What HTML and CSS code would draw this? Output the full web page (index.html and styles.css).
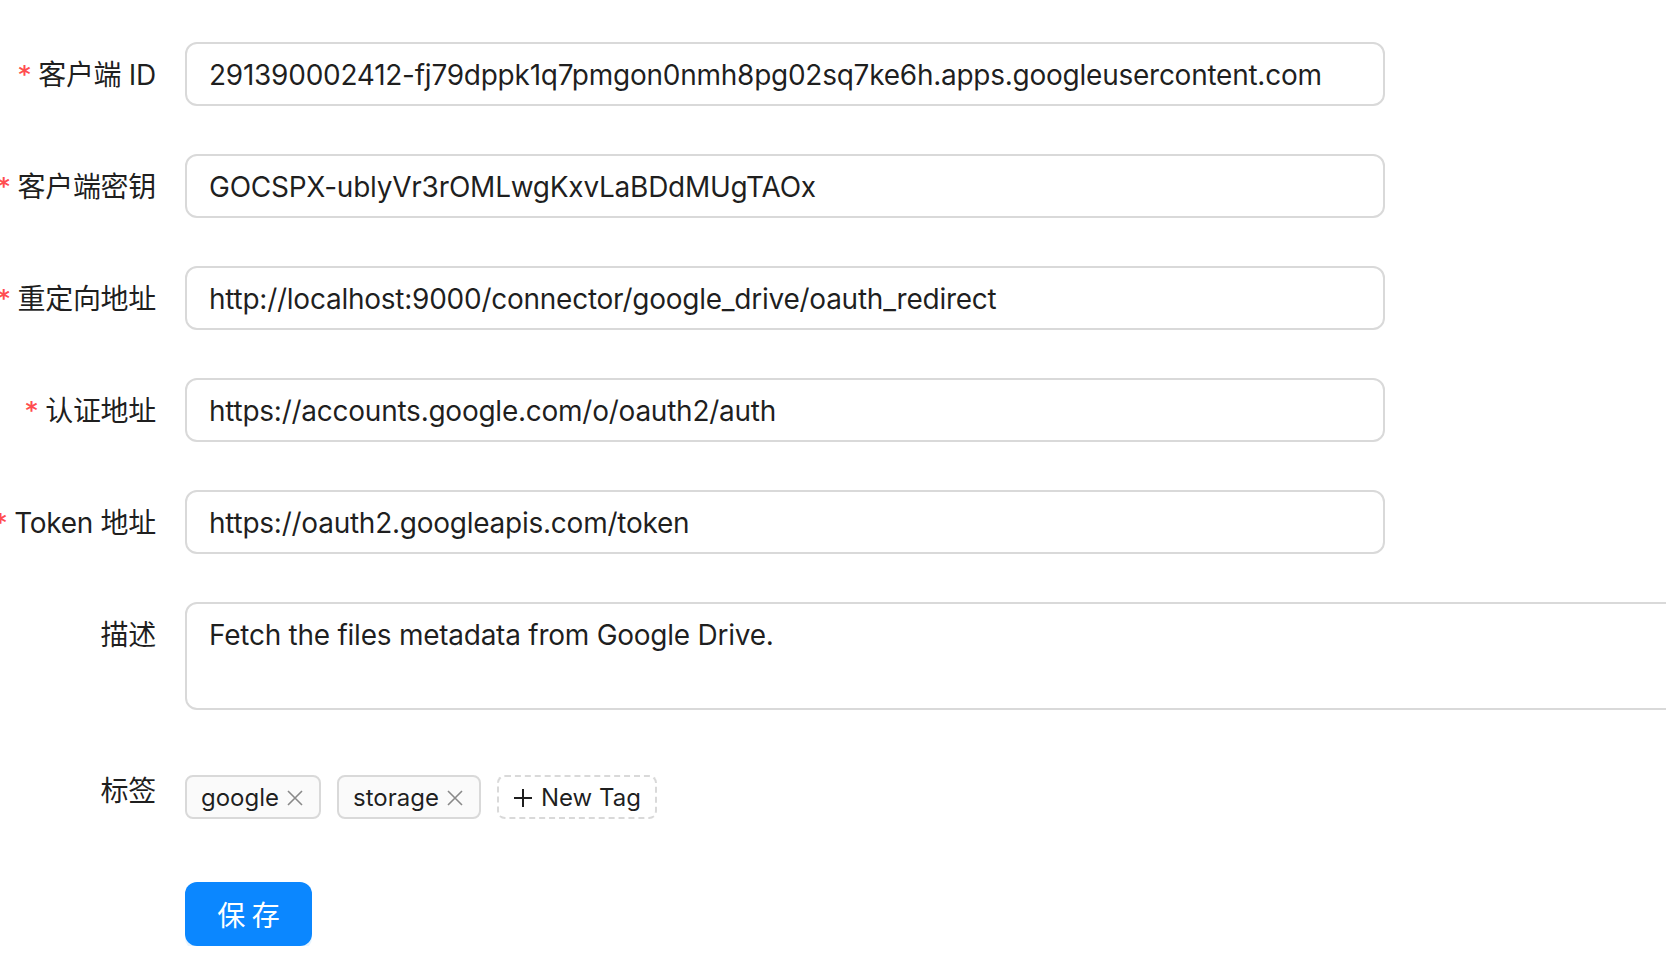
FILE: index.html
```html
<!DOCTYPE html>
<html lang="zh-CN">
<head>
<meta charset="utf-8">
<title>Google Drive Connector</title>
<link rel="stylesheet" href="styles.css">
</head>
<body>
<form class="form">
  <div class="row">
    <div class="label required"><span>客户端 ID</span></div>
    <div class="control"><div class="input">291390002412-fj79dppk1q7pmgon0nmh8pg02sq7ke6h.apps.googleusercontent.com</div></div>
  </div>
  <div class="row">
    <div class="label required"><span>客户端密钥</span></div>
    <div class="control"><div class="input">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</div></div>
  </div>
  <div class="row">
    <div class="label required"><span>重定向地址</span></div>
    <div class="control"><div class="input">http://localhost:9000/connector/google_drive/oauth_redirect</div></div>
  </div>
  <div class="row">
    <div class="label required"><span>认证地址</span></div>
    <div class="control"><div class="input">https://accounts.google.com/o/oauth2/auth</div></div>
  </div>
  <div class="row">
    <div class="label required"><span>Token 地址</span></div>
    <div class="control"><div class="input">https://oauth2.googleapis.com/token</div></div>
  </div>
  <div class="row">
    <div class="label"><span>描述</span></div>
    <div class="control"><div class="textarea">Fetch the files metadata from Google Drive.</div></div>
  </div>
  <div class="row">
    <div class="label"><span>标签</span></div>
    <div class="control">
      <div class="tags">
        <span class="tag">google<svg class="close" viewBox="0 0 20 20"><path d="M3 3L17 17M17 3L3 17" stroke="currentColor" stroke-width="1.6" fill="none"/></svg></span>
        <span class="tag">storage<svg class="close" viewBox="0 0 20 20"><path d="M3 3L17 17M17 3L3 17" stroke="currentColor" stroke-width="1.6" fill="none"/></svg></span>
        <span class="tag tag-new"><svg class="plus" viewBox="0 0 20 20"><path d="M10 1V19M1 10H19" stroke="currentColor" stroke-width="2" fill="none"/></svg>New Tag</span>
      </div>
    </div>
  </div>
  <div class="row">
    <div class="label"></div>
    <div class="control"><button type="button" class="btn">保 存</button></div>
  </div>
</form>
</body>
</html>
```

FILE: styles.css
```css
html, body {
  margin: 0;
  padding: 0;
  background: #fff;
  overflow: hidden;
}
body {
  font-family: Inter, "Noto Sans CJK SC", "Noto Sans", sans-serif;
  color: rgba(0, 0, 0, 0.88);
  font-size: 28px;
}
.form {
  padding-top: 42px;
  display: flex;
  flex-direction: column;
  gap: 48px;
}
.row {
  display: flex;
  align-items: flex-start;
}
.label {
  width: 185px;
  flex: none;
  display: flex;
  justify-content: flex-end;
  white-space: nowrap;
  height: 64px;
  line-height: 66px;
  padding-right: 29px;
  box-sizing: border-box;
  letter-spacing: -0.3px;
}
.label.required span::before {
  content: "*";
  color: #ff4d4f;
  font-family: "DejaVu Sans", sans-serif;
  font-weight: bold;
  font-size: 23px;
  margin-right: 8px;
  display: inline-block;
  vertical-align: 3px;
  line-height: 1;
}
.control {
  flex: none;
}
.input {
  width: 1200px;
  height: 64px;
  box-sizing: border-box;
  border: 2px solid #d9d9d9;
  border-radius: 12px;
  padding: 9px 22px 7px;
  line-height: 44px;
  white-space: nowrap;
  overflow: hidden;
  letter-spacing: -0.25px;
}
.textarea {
  width: 1600px;
  height: 108px;
  box-sizing: border-box;
  border: 2px solid #d9d9d9;
  border-radius: 12px;
  padding: 9px 22px 7px;
  line-height: 44px;
  letter-spacing: -0.25px;
}
.tags {
  display: flex;
  gap: 16px;
  padding: 17px 0 15px;
}
.tag {
  display: inline-flex;
  align-items: center;
  height: 44px;
  box-sizing: border-box;
  padding: 2px 14px 0;
  border: 2px solid #d9d9d9;
  border-radius: 8px;
  background: #fafafa;
  font-size: 24px;
  line-height: 40px;
}
.close {
  width: 20px;
  height: 20px;
  margin-left: 6px;
  color: rgba(0, 0, 0, 0.45);
}
.tag-new {
  background: #fff;
  border-style: dashed;
}
.plus {
  width: 20px;
  height: 20px;
  margin-right: 8px;
}
.btn {
  width: 127px;
  height: 64px;
  border: none;
  border-radius: 12px;
  background: #0b87ff;
  color: #fff;
  font-family: "Noto Sans CJK SC", sans-serif;
  font-size: 28px;
  padding: 0;
  box-shadow: 0 4px 0 rgba(5, 145, 255, 0.1);
}
```
